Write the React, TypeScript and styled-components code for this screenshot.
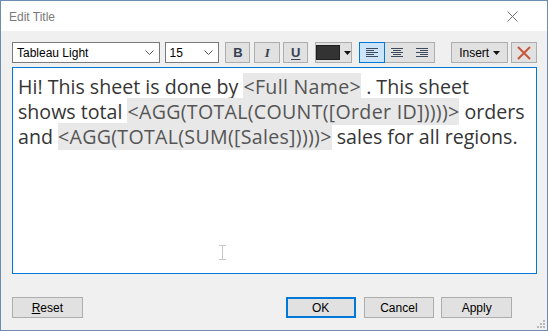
import React from 'react';
import styled, { createGlobalStyle } from 'styled-components';

const GlobalStyle = createGlobalStyle`
  body {
    margin: 0;
    background: #ffffff;
    font-family: 'Liberation Sans', Arial, sans-serif;
  }
`;

const Window = styled.div`
  position: relative;
  width: 548px;
  height: 331px;
  box-sizing: border-box;
  border: 1px solid #6d8db0;
  background: #f0f0f0;
  display: flex;
  flex-direction: column;
`;

const TitleBar = styled.div`
  height: 30px;
  background: #ffffff;
  display: flex;
  align-items: center;
  justify-content: space-between;
  padding: 0 29px 0 8px;
`;

const Title = styled.span`
  font-size: 12px;
  color: #7a7a7a;
  margin-top: 1px;
`;

const Body = styled.div`
  flex: 1;
  display: flex;
  flex-direction: column;
  padding: 11px 10px 0 11px;
`;

const Toolbar = styled.div`
  display: flex;
  height: 21px;
`;

const Select = styled.div<{ $w: number; $ml?: number }>`
  width: ${(p) => p.$w}px;
  margin-left: ${(p) => p.$ml ?? 0}px;
  box-sizing: border-box;
  border: 1px solid #7a7a7a;
  background: #ffffff;
  display: flex;
  align-items: center;
  justify-content: space-between;
  padding: 0 5px 0 4px;
  font-size: 12px;
  color: #000000;
`;

const ToolButton = styled.div<{ $w: number; $ml?: number; $active?: boolean }>`
  width: ${(p) => p.$w}px;
  margin-left: ${(p) => p.$ml ?? 0}px;
  box-sizing: border-box;
  border: 1px solid ${(p) => (p.$active ? '#0078d7' : '#adadad')};
  background: ${(p) => (p.$active ? '#cce4f7' : '#e1e1e1')};
  display: flex;
  align-items: center;
  justify-content: center;
  gap: 4px;
  font-size: 12px;
  color: #000000;
`;

const AlignGroup = styled.div<{ $ml: number }>`
  display: flex;
  margin-left: ${(p) => p.$ml}px;
  border: 1px solid #adadad;
  background: #e1e1e1;
`;

const AlignButton = styled.div<{ $active?: boolean }>`
  width: ${(p) => (p.$active ? 24 : 25)}px;
  display: flex;
  align-items: center;
  justify-content: center;
  background: ${(p) => (p.$active ? '#cce4f7' : 'transparent')};
  outline: ${(p) => (p.$active ? '1px solid #0078d7' : 'none')};
`;

const Glyph = styled.span<{ $italic?: boolean; $underline?: boolean }>`
  font-family: ${(p) => (p.$italic ? "'Liberation Serif', serif" : "'Liberation Sans', sans-serif")};
  font-weight: bold;
  font-style: ${(p) => (p.$italic ? 'italic' : 'normal')};
  font-size: 13px;
  color: #364253;
  text-decoration: ${(p) => (p.$underline ? 'underline' : 'none')};
  text-underline-offset: 2px;
`;

const Swatch = styled.span`
  width: 22px;
  height: 13px;
  background: #333333;
  border: 1px solid #1f1f1f;
`;

const Editor = styled.div`
  margin-top: 4px;
  width: 525px;
  height: 207px;
  box-sizing: border-box;
  border: 1px solid #0078d7;
  background: #ffffff;
  padding: 6px 4px 0 5px;
  font-family: 'Open Sans', 'Noto Sans', sans-serif;
  font-size: 19.6px;
  line-height: 25px;
  color: #353535;
  white-space: nowrap;
`;

const Field = styled.span`
  background: #e8e8e8;
  color: #555555;
  letter-spacing: 0.3px;
`;

const Footer = styled.div`
  margin-top: 23px;
  display: flex;
  padding-right: 25px;
`;

const DialogButton = styled.div<{ $ml?: number; $primary?: boolean }>`
  width: ${(p) => (p.$primary ? 70 : 71)}px;
  height: 21px;
  margin-left: ${(p) => p.$ml ?? 0}px;
  box-sizing: border-box;
  border: ${(p) => (p.$primary ? '2px solid #0078d7' : '1px solid #adadad')};
  background: #e1e1e1;
  display: flex;
  align-items: center;
  justify-content: center;
  font-size: 12px;
  color: #000000;
`;

const Cursor = styled.svg`
  position: absolute;
  left: 218px;
  top: 244px;
`;

const Grip = styled.svg`
  position: absolute;
  right: 1px;
  bottom: 1px;
`;

const Chevron = () => (
  <svg width="9" height="6" viewBox="0 0 9 6">
    <path d="M0.5 0.5 L4.5 4.5 L8.5 0.5" fill="none" stroke="#555" strokeWidth="1" />
  </svg>
);

const Caret = () => (
  <svg width="7" height="4" viewBox="0 0 7 4">
    <path d="M0 0 H7 L3.5 4 Z" fill="#111" />
  </svg>
);

const AlignIcon = ({ kind }: { kind: 'left' | 'center' | 'right' }) => (
  <svg width="12" height="9" viewBox="0 0 12 9">
    {[0, 1, 2, 3, 4].map((i) => {
      const full = i % 2 === 0 ? 12 : 8;
      const x = kind === 'left' ? 0 : kind === 'center' ? (12 - full) / 2 : 12 - full;
      return <rect key={i} x={x} y={i * 2} width={full} height="1" fill="#3d4a5c" />;
    })}
  </svg>
);

export default function App() {
  return (
    <>
      <GlobalStyle />
      <Window>
        <TitleBar>
          <Title>Edit Title</Title>
          <svg width="11" height="11" viewBox="0 0 11 11">
            <path d="M0.5 0.5 L10.5 10.5 M10.5 0.5 L0.5 10.5" stroke="#6f6f6f" strokeWidth="1" />
          </svg>
        </TitleBar>
        <Body>
          <Toolbar>
            <Select $w={148}>
              <span>Tableau Light</span>
              <Chevron />
            </Select>
            <Select $w={55} $ml={5}>
              <span>15</span>
              <Chevron />
            </Select>
            <ToolButton $w={25} $ml={6}>
              <Glyph>B</Glyph>
            </ToolButton>
            <ToolButton $w={26} $ml={4}>
              <Glyph $italic>I</Glyph>
            </ToolButton>
            <ToolButton $w={25} $ml={3}>
              <Glyph $underline>U</Glyph>
            </ToolButton>
            <ToolButton $w={37} $ml={7}>
              <Swatch />
              <Caret />
            </ToolButton>
            <AlignGroup $ml={7}>
              <AlignButton $active>
                <AlignIcon kind="left" />
              </AlignButton>
              <AlignButton>
                <AlignIcon kind="center" />
              </AlignButton>
              <AlignButton>
                <AlignIcon kind="right" />
              </AlignButton>
            </AlignGroup>
            <ToolButton $w={57} $ml={16}>
              <span>Insert</span>
              <Caret />
            </ToolButton>
            <ToolButton $w={26} $ml={3}>
              <svg width="14" height="14" viewBox="0 0 14 14">
                <path d="M1 1 L13 13 M13 1 L1 13" stroke="#c8563a" strokeWidth="2" />
              </svg>
            </ToolButton>
          </Toolbar>
          <Editor>
            Hi! This sheet is done by <Field>&lt;Full Name&gt;</Field> . This sheet
            <br />
            shows total <Field>&lt;AGG(TOTAL(COUNT([Order ID]))))&gt;</Field> orders
            <br />
            and <Field>&lt;AGG(TOTAL(SUM([Sales]))))&gt;</Field> sales for all regions.
          </Editor>
          <Footer>
            <DialogButton>
              <span>
                <u>R</u>eset
              </span>
            </DialogButton>
            <DialogButton $primary $ml={203}>
              OK
            </DialogButton>
            <DialogButton $ml={8}>Cancel</DialogButton>
            <DialogButton $ml={7}>Apply</DialogButton>
          </Footer>
        </Body>
        <Cursor width="7" height="15" viewBox="0 0 7 15">
          <path d="M0 0.5 H7 M0 14.5 H7 M3.5 0.5 V14.5" stroke="#c8c8c8" strokeWidth="1" fill="none" />
        </Cursor>
        <Grip width="10" height="10" viewBox="0 0 10 10">
          {[
            [7, 1],
            [4, 4],
            [7, 4],
            [1, 7],
            [4, 7],
            [7, 7],
          ].map(([x, y]) => (
            <rect key={`${x}-${y}`} x={x} y={y} width="2" height="2" fill="#b8b8b8" />
          ))}
        </Grip>
      </Window>
    </>
  );
}
